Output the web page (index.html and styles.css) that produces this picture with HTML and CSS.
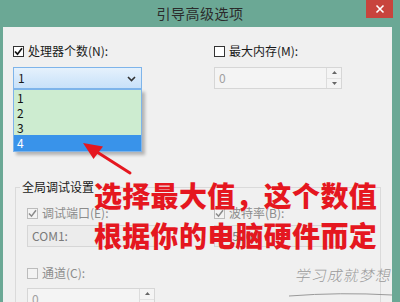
FILE: index.html
```html
<!DOCTYPE html>
<html>
<head>
<meta charset="utf-8">
<link rel="stylesheet" href="styles.css">
</head>
<body>
<div class="window">
  <div class="titlebar">
    <span></span>
    <span class="title">引导高级选项</span>
    <div class="close"><svg width="10" height="10" viewBox="0 0 10 10"><path d="M1.5 1.5L8.5 8.5M8.5 1.5L1.5 8.5" stroke="#fff" stroke-width="1.6"/></svg></div>
  </div>
  <div class="client">
    <div class="row top">
      <div class="col c1">
        <label class="chk"><span class="box"><svg width="9" height="9" viewBox="0 0 9 9"><path d="M1 4.5L3.5 7.2L8 1.2" fill="none" stroke="#111" stroke-width="1.7"/></svg></span>处理器个数(N):</label>
        <div class="combo active">
          <span class="val">1</span>
          <svg class="chev" width="9" height="6" viewBox="0 0 9 6"><path d="M1 1L4.5 4.5L8 1" fill="none" stroke="#333" stroke-width="1.6"/></svg>
          <ul class="droplist">
            <li>1</li>
            <li>2</li>
            <li>3</li>
            <li class="sel">4</li>
          </ul>
        </div>
      </div>
      <div class="col">
        <label class="chk"><span class="box"></span>最大内存(M):</label>
        <div class="spin dis">
          <span class="val">0</span>
          <div class="btns">
            <span><svg width="5" height="3" viewBox="0 0 5 3"><path d="M0 3L2.5 0L5 3Z" fill="#666"/></svg></span>
            <span><svg width="5" height="3" viewBox="0 0 5 3"><path d="M0 0L2.5 3L5 0Z" fill="#666"/></svg></span>
          </div>
        </div>
      </div>
    </div>
    <div class="group">
      <div class="legend">全局调试设置</div>
      <div class="row g1">
        <div class="col gc1">
          <label class="chk dis"><span class="box"><svg width="9" height="9" viewBox="0 0 9 9"><path d="M1 4.5L3.5 7.2L8 1.2" fill="none" stroke="#8a8a8a" stroke-width="1.5"/></svg></span>调试端口(E):</label>
          <div class="combo dis"><span class="val">COM1:</span></div>
        </div>
        <div class="col">
          <label class="chk dis"><span class="box"><svg width="9" height="9" viewBox="0 0 9 9"><path d="M1 4.5L3.5 7.2L8 1.2" fill="none" stroke="#8a8a8a" stroke-width="1.5"/></svg></span>波特率(B):</label>
          <div class="combo dis"><span class="val">115200</span></div>
        </div>
      </div>
      <div class="col g2">
        <label class="chk dis"><span class="box"></span>通道(C):</label>
        <div class="spin dis">
          <span class="val">0</span>
          <div class="btns">
            <span><svg width="5" height="3" viewBox="0 0 5 3"><path d="M0 3L2.5 0L5 3Z" fill="#666"/></svg></span>
            <span><svg width="5" height="3" viewBox="0 0 5 3"><path d="M0 0L2.5 3L5 0Z" fill="#666"/></svg></span>
          </div>
        </div>
      </div>
    </div>
  </div>
  <svg class="overlay" width="400" height="302" viewBox="0 0 400 302">
    <line x1="97" y1="152" x2="130" y2="173" stroke="#e5171f" stroke-width="3" stroke-linecap="round"/>
    <path d="M83 143L103 146.5L93.5 159Z" fill="#e5171f"/>
    <path d="M289 296Q340 292 392 295" fill="none" stroke="#9a9a9a" stroke-width="1"/>
  </svg>
  <div class="annot">选择最大值，这个数值<br>根据你的电脑硬件而定</div>
  <div class="watermark">学习成就梦想</div>
</div>
</body>
</html>
```
FILE: styles.css
```css
* { box-sizing: border-box; }
html, body { margin: 0; padding: 0; }
body {
  width: 400px;
  height: 302px;
  overflow: hidden;
  background: #6ba895;
  font-family: "Noto Sans CJK SC", "Noto Sans", sans-serif;
  font-size: 12px;
  color: #1a1a1a;
}
.window {
  position: relative;
  width: 400px;
  height: 302px;
  display: flex;
  flex-direction: column;
  background: #6ba895;
}
.titlebar {
  height: 27px;
  flex: none;
  display: grid;
  grid-template-columns: 1fr auto 1fr;
  align-items: start;
}
.title {
  font-size: 14px;
  line-height: 26px;
  color: #2b2b2b;
  letter-spacing: 0.5px;
}
.close {
  justify-self: end;
  margin-right: 7px;
  width: 27px;
  height: 18px;
  background: #c8443d;
  display: flex;
  align-items: center;
  justify-content: center;
}
.client {
  flex: 1;
  margin: 0 8px 0 3px;
  background: #f0f0f0;
  padding: 16px 0 0 10px;
  overflow: hidden;
}
.row { display: flex; }
.col { display: flex; flex-direction: column; }
.c1 { width: 201px; }
.chk {
  display: flex;
  align-items: center;
  height: 16px;
  line-height: 16px;
  white-space: nowrap;
}
.chk .box {
  width: 11px;
  height: 11px;
  border: 1px solid #333;
  background: #fff;
  margin-right: 4px;
  display: flex;
  align-items: center;
  justify-content: center;
  flex: none;
}
.chk.dis { color: #8c8c8c; }
.chk.dis .box { border-color: #bcbcbc; background: #f3f3f3; }
.combo, .spin {
  position: relative;
  width: 129px;
  height: 22px;
  margin-top: 8px;
  display: flex;
  align-items: center;
  padding-left: 4px;
}
.combo.active {
  border: 1px solid #7eb4ea;
  background: linear-gradient(#e5f1fc, #c8e1f9);
}
.combo .chev { position: absolute; right: 5px; top: 8px; }
.val { line-height: 20px; }
.droplist {
  position: absolute;
  left: -1px;
  top: 21px;
  width: 129px;
  margin: 0;
  padding: 0;
  list-style: none;
  background: #cdecd0;
  border: 1px solid #7eb4ea;
  box-shadow: 3px 3px 3px rgba(0,0,0,0.25);
  z-index: 2;
}
.droplist li {
  height: 15px;
  line-height: 15px;
  padding-left: 3px;
  color: #111;
}
.droplist li.sel {
  background: #3993ea;
  color: #fff;
  height: 16px;
}
.spin.dis {
  width: 128px;
  border: 1px solid #d6d6d6;
  background: #f4f4f4;
  color: #a0a0a0;
}
.spin .btns {
  position: absolute;
  right: 0;
  top: 0;
  bottom: 0;
  width: 15px;
  border-left: 1px solid #dcdcdc;
  display: flex;
  flex-direction: column;
}
.spin .btns span {
  flex: 1;
  display: flex;
  align-items: center;
  justify-content: center;
}
.spin .btns span + span { border-top: 1px solid #e2e2e2; }
.combo.dis {
  border: 1px solid #d6d6d6;
  background: #ececec;
  color: #7a7a7a;
}
.group {
  margin: 98px 0 0 2px;
  width: 366px;
  height: 200px;
  border: 1px solid #dadada;
  padding-left: 11px;
}
.legend {
  display: block;
  width: max-content;
  margin: -8px 0 0 -7px;
  padding: 0 2px;
  background: #f0f0f0;
  height: 14px;
  line-height: 14px;
  color: #1a1a1a;
}
.g1 { margin-top: 11px; }
.gc1 { width: 187px; }
.g1 .combo { margin-top: 4px; }
.g2 { margin-top: 18px; }
.g2 .spin { margin-top: 7px; }
.overlay {
  position: absolute;
  left: 0;
  top: 0;
  pointer-events: none;
  z-index: 3;
}
.annot {
  position: absolute;
  left: 94px;
  top: 175px;
  font-size: 28px;
  line-height: 40px;
  font-weight: 900;
  color: #e5171f;
  white-space: nowrap;
  letter-spacing: 0.3px;
  z-index: 4;
}
.watermark {
  position: absolute;
  left: 296px;
  top: 264px;
  font-size: 15px;
  line-height: 22px;
  font-weight: 300;
  color: #9a9a9a;
  letter-spacing: 1px;
  transform: skewX(-12deg);
  z-index: 4;
}
```
